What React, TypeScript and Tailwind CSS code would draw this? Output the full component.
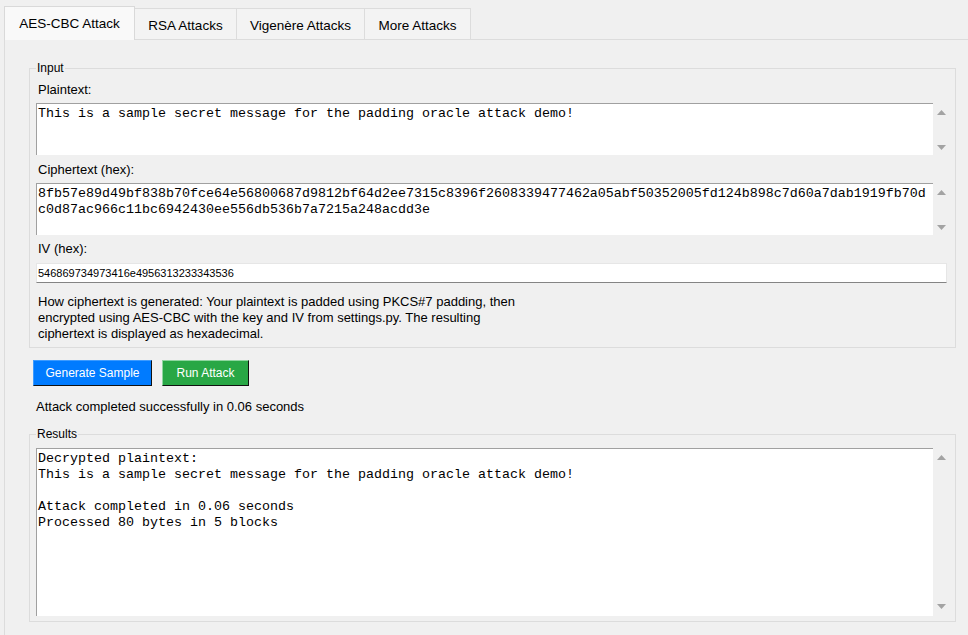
import React from 'react';

const plain = 'This is a sample secret message for the padding oracle attack demo!';
const cipher1 = '8fb57e89d49bf838b70fce64e56800687d9812bf64d2ee7315c8396f2608339477462a05abf50352005fd124b898c7d60a7dab1919fb70d';
const cipher2 = 'c0d87ac966c11bc6942430ee556db536b7a7215a248acdd3e';

const Arrow = ({ down }: { down?: boolean }) => (
  <svg width="9" height="5" viewBox="0 0 9 5" className={down ? 'rotate-180' : ''}>
    <path d="M0 5 L4.5 0 L9 5 Z" fill="#a3a3a3" />
  </svg>
);

// text widget with a scrollbar on the right
const ScrollBox = ({ tall, children }: { tall?: boolean; children: React.ReactNode }) => (
  <div className={tall ? 'flex h-[168px]' : 'flex h-[52px]'}>
    <div className="flex-1 bg-white border-t border-l border-[#a0a0a0] pl-px pt-[2px] font-['Liberation_Mono','Courier_New',monospace] text-[13.333px] leading-4 text-black whitespace-pre overflow-hidden">
      {children}
    </div>
    <div className={tall ? 'w-4 flex flex-col items-center justify-between pt-[7px] pb-[7px]' : 'w-4 flex flex-col items-center justify-between pt-[7px] pb-[5px]'}>
      <Arrow />
      <Arrow down />
    </div>
  </div>
);

const tabs = [
  { label: 'AES-CBC Attack', w: 'w-[131px] border-l' },
  { label: 'RSA Attacks', w: 'w-[102px]' },
  { label: 'Vigenère Attacks', w: 'w-[128px]' },
  { label: 'More Attacks', w: 'w-[106px]' },
];

export default function App() {
  return (
    <div className="w-[968px] h-[635px] overflow-hidden bg-[#f0f0f0] font-['Liberation_Sans',Arial,sans-serif] text-black">
      {/* tabs */}
      <div className="flex items-end h-[39px] pl-1">
        {tabs.map((t, i) =>
          i === 0 ? (
            <div key={t.label} className={`relative z-10 -mb-px h-[34px] flex items-center justify-center pt-[2px] bg-[#f9f9f9] border-t border-r border-[#d9d9d9] text-[13.5px] ${t.w}`}>
              {t.label}
            </div>
          ) : (
            <div key={t.label} className={`h-[31px] flex items-center justify-center pt-[5px] bg-[#f3f3f3] border-t border-r border-[#dcdcdc] text-[13.5px] ${t.w}`}>
              {t.label}
            </div>
          )
        )}
      </div>

      <div className="ml-1 h-[600px] border-t border-l border-[#dcdcdc] pt-5 pl-6">
        <fieldset className="w-[927px] border border-[#dcdcdc] px-[6px] pt-[6px] pb-[5px]">
          <legend className="px-px text-[12px] leading-4">Input</legend>
          <div className="pl-[2px] text-[13px] leading-4">Plaintext:</div>
          <div className="mt-[5px]">
            <ScrollBox>{plain}</ScrollBox>
          </div>
          <div className="mt-[7px] pl-[2px] text-[13px] leading-4">Ciphertext (hex):</div>
          <div className="mt-[5px]">
            <ScrollBox>
              {cipher1}
              {'\n'}
              {cipher2}
            </ScrollBox>
          </div>
          <div className="mt-[6px] pl-[2px] text-[13px] leading-4">IV (hex):</div>
          <div className="mt-[6px] h-5 w-[911px] flex items-center bg-white border border-[#e6e6e6] border-b-[#848484] pl-px text-[11px]">
            546869734973416e4956313233343536
          </div>
          <p className="mt-[11px] pl-[2px] text-[13px] leading-4">
            How ciphertext is generated: Your plaintext is padded using PKCS#7 padding, then
            <br />
            encrypted using AES-CBC with the key and IV from settings.py. The resulting
            <br />
            ciphertext is displayed as hexadecimal.
          </p>
        </fieldset>

        <div className="mt-3 ml-1 flex gap-[10px]">
          <button className="h-[26px] w-[119px] bg-[#007bff] border border-t-[#3d9bff] border-l-[#3d9bff] border-r-[#111] border-b-[#111] text-white text-[12px]">
            Generate Sample
          </button>
          <button className="h-[26px] w-[87px] bg-[#28a745] border border-t-[#8fd6a0] border-l-[#8fd6a0] border-r-[#111] border-b-[#111] text-white text-[12px]">
            Run Attack
          </button>
        </div>

        <div className="mt-[13px] pl-[7px] text-[13px] leading-4">Attack completed successfully in 0.06 seconds</div>

        <fieldset className="mt-[11px] w-[927px] border border-[#dcdcdc] px-[6px] pt-[6px] pb-[5px]">
          <legend className="px-px text-[12px] leading-4">Results</legend>
          <ScrollBox tall>
            {'Decrypted plaintext:\n'}
            {plain}
            {'\n\nAttack completed in 0.06 seconds\nProcessed 80 bytes in 5 blocks'}
          </ScrollBox>
        </fieldset>
      </div>
    </div>
  );
}
